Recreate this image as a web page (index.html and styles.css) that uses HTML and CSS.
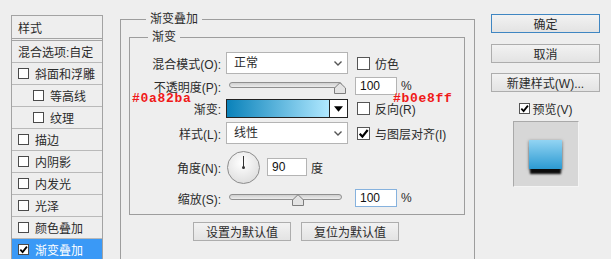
FILE: index.html
```html
<!DOCTYPE html>
<html lang="zh-CN">
<head>
    <meta charset="UTF-8">
    <title>图层样式 - 渐变叠加</title>
    <link rel="stylesheet" href="styles.css">
</head>
<body>
    <div class="dialog">
        <ul class="styles">
            <li class="head">样式</li>
            <li class="blend">混合选项:自定</li>
            <li><span class="cb"></span>斜面和浮雕</li>
            <li class="sub"><span class="cb"></span>等高线</li>
            <li class="sub"><span class="cb"></span>纹理</li>
            <li><span class="cb"></span>描边</li>
            <li><span class="cb"></span>内阴影</li>
            <li><span class="cb"></span>内发光</li>
            <li><span class="cb"></span>光泽</li>
            <li><span class="cb"></span>颜色叠加</li>
            <li class="active"><span class="cb on"><svg viewBox="0 0 10 10"><path d="M1.5 5.2 L4 7.8 L8.8 1.8" /></svg></span>渐变叠加</li>
        </ul>

        <fieldset class="outer">
            <legend>渐变叠加</legend>
            <fieldset class="inner">
                <legend>渐变</legend>

                <div class="row r1">
                    <label>混合模式(O):</label>
                    <div class="select">正常<svg class="chev" viewBox="0 0 8 5"><path d="M0.5 0.5 L4 4 L7.5 0.5" /></svg></div>
                    <span class="check"><span class="cb"></span>仿色</span>
                </div>

                <div class="row r2">
                    <label>不透明度(P):</label>
                    <div class="slider">
                        <div class="track"></div>
                        <svg class="thumb" style="left: 105px" viewBox="0 0 12 12"><polygon points="0.5,11.5 0.5,6 6,0.7 11.5,6 11.5,11.5" /></svg>
                    </div>
                    <input class="num" type="text" value="100">
                    <span class="unit">%</span>
                </div>

                <div class="row r3">
                    <label>渐变:</label>
                    <div class="gradient">
                        <div class="ramp"></div>
                        <div class="drop"><svg viewBox="0 0 10 6"><polygon points="0,0 10,0 5,6" /></svg></div>
                    </div>
                    <span class="check"><span class="cb"></span>反向(R)</span>
                </div>

                <div class="row r4">
                    <label>样式(L):</label>
                    <div class="select">线性<svg class="chev" viewBox="0 0 8 5"><path d="M0.5 0.5 L4 4 L7.5 0.5" /></svg></div>
                    <span class="check"><span class="cb on"><svg viewBox="0 0 10 10"><path d="M1.5 5.2 L4 7.8 L8.8 1.8" /></svg></span>与图层对齐(I)</span>
                </div>

                <div class="row r5">
                    <label>角度(N):</label>
                    <div class="dial"><span class="hand"></span><span class="dot"></span></div>
                    <input class="num angle" type="text" value="90">
                    <span class="unit">度</span>
                </div>

                <div class="row r6">
                    <label>缩放(S):</label>
                    <div class="slider">
                        <div class="track"></div>
                        <svg class="thumb" style="left: 63px" viewBox="0 0 12 12"><polygon points="0.5,11.5 0.5,6 6,0.7 11.5,6 11.5,11.5" /></svg>
                    </div>
                    <input class="num focus" type="text" value="100">
                    <span class="unit">%</span>
                </div>
            </fieldset>

            <div class="defaults">
                <button>设置为默认值</button>
                <button>复位为默认值</button>
            </div>
        </fieldset>

        <div class="side">
            <button class="default">确定</button>
            <button>取消</button>
            <button>新建样式(W)...</button>
            <span class="check preview-check"><span class="cb on"><svg viewBox="0 0 10 10"><path d="M1.5 5.2 L4 7.8 L8.8 1.8" /></svg></span>预览(V)</span>
            <div class="preview"><div class="swatch"></div></div>
        </div>

        <span class="note note-start">#0a82ba</span>
        <span class="note note-end">#b0e8ff</span>
    </div>
</body>
</html>
```

FILE: styles.css
```css
body {
    margin: 0;
    background-color: #eeeeee;
    font-family: "Liberation Sans", "Noto Sans CJK SC", sans-serif;
    font-size: 12px;
    color: #2b2b2b;
    overflow: hidden;
}
.dialog {
    position: relative;
    display: flex;
    align-items: flex-start;
    width: 611px;
    height: 259px;
    overflow: hidden;
}

/* left list of effects */
.styles {
    list-style: none;
    margin: 15px 0 0 11px;
    padding: 0;
    width: 90px;
    border: 1px solid #a3a3a3;
    border-bottom: none;
}
.styles li {
    display: flex;
    align-items: center;
    height: 21px;
    padding-left: 6px;
    border-bottom: 1px solid #b9b9b9;
    white-space: nowrap;
}
.styles li.head {
    height: 22px;
    border-bottom: 3px double #a3a3a3;
}
.styles li.sub {
    padding-left: 21px;
}
.styles li.active {
    background-color: #3a99f6;
    color: #fff;
}
.cb {
    display: inline-block;
    box-sizing: border-box;
    width: 11px;
    height: 11px;
    background: #fff;
    border: 1px solid #4a4a4a;
    margin-right: 6px;
    flex-shrink: 0;
}
.cb svg {
    display: block;
    width: 9px;
    height: 9px;
}
.cb svg path {
    fill: none;
    stroke: #000;
    stroke-width: 2;
}

/* main group */
fieldset {
    margin: 0;
    padding: 0;
    border: 1px solid #9d9d9d;
    min-width: 0;
}
legend {
    padding: 0 4px;
    line-height: 16px;
}
.outer {
    margin: 11px 0 0 17px;
    width: 336px;
    height: 260px;
    padding: 0 9px 0 8px;
}
.outer > legend {
    margin-left: 17px;
}
.inner {
    margin-top: 2px;
    padding: 0 0 7px 0;
}
.inner > legend {
    margin-left: 18px;
}
.row {
    display: flex;
    align-items: center;
}
.row label {
    width: 91px;
    text-align: right;
    margin-right: 5px;
    white-space: nowrap;
}
.r1 { height: 22px; margin-top: 7px; }
.r2 { height: 18px; margin-top: 3px; }
.r3 { height: 19px; margin-top: 4px; }
.r4 { height: 22px; margin-top: 4px; }
.r5 { height: 34px; margin-top: 6px; }
.r6 { height: 18px; margin-top: 5px; }

.select {
    box-sizing: border-box;
    position: relative;
    width: 122px;
    height: 22px;
    line-height: 20px;
    padding-left: 7px;
    background: #fff;
    border: 1px solid #b4b4b4;
}
.chev {
    position: absolute;
    right: 5px;
    top: 8px;
    width: 8px;
    height: 5px;
}
.chev path {
    fill: none;
    stroke: #555;
    stroke-width: 1.4;
}
.check {
    display: flex;
    align-items: center;
    margin-left: 9px;
    white-space: nowrap;
}
.check .cb {
    width: 13px;
    height: 13px;
    border-color: #555;
    margin-right: 5px;
}
.check .cb svg {
    width: 11px;
    height: 11px;
}

.slider {
    position: relative;
    width: 113px;
    height: 18px;
    margin-left: 3px;
}
.track {
    position: absolute;
    left: 0;
    right: 0;
    top: 5px;
    height: 4px;
    border: 1px solid #8f8f8f;
    border-radius: 3px;
    background: linear-gradient(#cfcfcf, #ececec);
}
.thumb {
    position: absolute;
    top: 5px;
    width: 12px;
    height: 12px;
}
.thumb polygon {
    fill: #e3e3e3;
    stroke: #7d7d7d;
    stroke-width: 1;
}
.num {
    box-sizing: border-box;
    width: 42px;
    height: 18px;
    margin: 0 0 0 13px;
    padding: 0 4px;
    border: 1px solid #b4b4b4;
    background: #fff;
    font: inherit;
    color: #111;
}
.num.focus {
    border-color: #86b2de;
}
.num.angle {
    width: 40px;
    margin-left: 7px;
}
.unit {
    margin-left: 4px;
}

.gradient {
    box-sizing: border-box;
    display: flex;
    width: 122px;
    height: 19px;
    border: 1px solid #222;
}
.ramp {
    flex: 1;
    background: linear-gradient(to right, #0a82ba, #b0e8ff);
}
.drop {
    width: 17px;
    border-left: 1px solid #222;
    background: #fff;
    display: flex;
    align-items: center;
    justify-content: center;
}
.drop svg {
    width: 9px;
    height: 6px;
}

.dial {
    position: relative;
    box-sizing: border-box;
    width: 33px;
    height: 33px;
    margin-left: 1px;
    border: 1px solid #8c8c8c;
    border-radius: 50%;
    background: radial-gradient(circle at 45% 35%, #ffffff, #e2e2e2 70%, #cfcfcf);
}
.hand {
    position: absolute;
    left: 15px;
    top: 4px;
    width: 1px;
    height: 12px;
    background: #333;
}
.dot {
    position: absolute;
    left: 14px;
    top: 14px;
    width: 3px;
    height: 3px;
    border-radius: 50%;
    background: #333;
}

.defaults {
    display: flex;
    gap: 10px;
    margin-top: 7px;
    padding-left: 64px;
}
button {
    box-sizing: border-box;
    height: 19px;
    padding: 0;
    border: 1px solid #adadad;
    background: linear-gradient(#f2f2f2, #e3e3e3);
    font: inherit;
    color: #2b2b2b;
}
.defaults button {
    width: 98px;
}

/* right column */
.side {
    display: flex;
    flex-direction: column;
    align-items: center;
    width: 109px;
    margin: 14px 0 0 16px;
}
.side button {
    width: 109px;
    height: 19px;
    margin-bottom: 10px;
}
.side button.default {
    border-color: #3f86c2;
    margin-bottom: 11px;
}
.preview-check {
    margin: -1px 0 0 0;
    height: 14px;
}
.preview-check .cb {
    width: 11px;
    height: 11px;
    margin-right: 3px;
}
.preview-check .cb svg {
    width: 9px;
    height: 9px;
}
.preview {
    box-sizing: border-box;
    width: 66px;
    height: 66px;
    margin-top: 6px;
    padding: 18px 0 0 15px;
    background: #d7d7d7;
    border: 1px solid #a9a9a9;
    border-right-color: #f4f4f4;
    border-bottom-color: #f4f4f4;
}
.swatch {
    width: 33px;
    height: 29px;
    background: linear-gradient(#92d4f3, #2c9ad2);
    box-shadow: 0 6px 2px -1px #0c0c0c, 0 1px 3px rgba(0, 0, 0, 0.5);
}

/* colour notes laid over the dialog */
.note {
    position: absolute;
    top: 92px;
    font-family: "Liberation Mono", monospace;
    font-weight: bold;
    font-size: 13px;
    line-height: 13px;
    letter-spacing: 0.7px;
    color: #f01818;
}
.note-start {
    left: 132px;
}
.note-end {
    left: 393px;
}
```
